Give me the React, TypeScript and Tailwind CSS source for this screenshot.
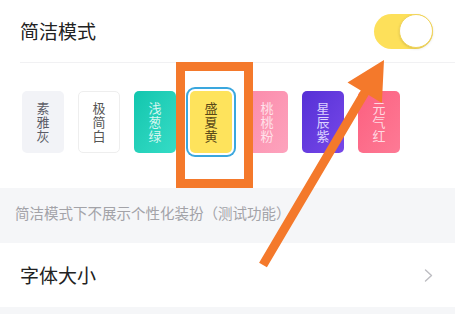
import React from 'react'

const themes = [
  { name: '素雅灰', card: 'bg-[#f2f3f7]', text: 'text-[#5c5c66]' },
  { name: '极简白', card: 'bg-white border border-[#eeeeee]', text: 'text-[#555555]' },
  { name: '浅葱绿', card: 'bg-gradient-to-br from-[#10c6ae] to-[#34dcc6]', text: 'text-[#d6f6f0]' },
  { name: '盛夏黄', card: 'bg-[#fee35c]', text: 'text-[#5a4818]', selected: true },
  { name: '桃桃粉', card: 'bg-gradient-to-br from-[#fb8bab] to-[#fda3bd]', text: 'text-[#ffe2ea]' },
  { name: '星辰紫', card: 'bg-gradient-to-br from-[#5630d6] to-[#7747e8]', text: 'text-[#ddd3ff]' },
  { name: '元气红', card: 'bg-gradient-to-br from-[#fc5f80] to-[#fd7a95]', text: 'text-[#ffd9e1]' },
]

function ThemeCard({ name, card, text, selected }: { name: string; card: string; text: string; selected?: boolean }) {
  return (
    <div
      className={`w-[42px] h-[62px] rounded-[5px] flex flex-col items-center justify-center shrink-0 ${card} ${
        selected ? 'ring-2 ring-[#3aa7de] ring-offset-2 ring-offset-white' : ''
      }`}
    >
      {name.split('').map((ch, i) => (
        <span key={i} className={`text-[13px] leading-[14px] ${text}`}>
          {ch}
        </span>
      ))}
    </div>
  )
}

export default function App() {
  return (
    <div
      className="relative w-[455px] h-[314px] overflow-hidden bg-white"
      style={{ fontFamily: '"Noto Sans CJK SC", "Noto Sans", sans-serif' }}
    >
      {/* 简洁模式 */}
      <div className="h-[62px] flex items-center justify-between pl-5 pr-[22px]">
        <span className="text-[19px] text-[#222222]">简洁模式</span>
        <div className="w-[59px] h-[35px] rounded-full bg-[#fde05a] flex items-center justify-end">
          <div className="w-[34px] h-[34px] rounded-full bg-white border border-[#f1d45a] shadow-sm" />
        </div>
      </div>
      <div className="ml-5 h-px bg-[#f1f1f3]" />

      {/* 主题 */}
      <div className="h-[125px] flex items-start gap-[14px] pl-[22px] pt-[28px]">
        {themes.map((t) => (
          <ThemeCard key={t.name} {...t} />
        ))}
      </div>

      {/* 说明 */}
      <div className="h-[55px] bg-[#f5f6f8] pl-[15px] pt-[12px]">
        <span className="text-[14.5px] text-[#a3a3a8]">简洁模式下不展示个性化装扮（测试功能）</span>
      </div>

      {/* 字体大小 */}
      <div className="h-[64px] flex items-center justify-between pl-5 pr-[22px]">
        <span className="text-[19px] text-[#222222]">字体大小</span>
        <svg width="9" height="13" viewBox="0 0 9 13" fill="none">
          <path d="M1.5 1l6 5.5-6 5.5" stroke="#bdbdc2" strokeWidth="1.4" strokeLinecap="round" strokeLinejoin="round" />
        </svg>
      </div>
      <div className="h-[7px] bg-[#f5f6f8]" />

      {/* 标注 */}
      <div className="absolute left-[176px] top-[62px] w-[77px] h-[126px] border-[9px] border-[#f4792b]" />
      <svg className="absolute left-0 top-0" width="455" height="314" viewBox="0 0 455 314">
        <polygon
          points="384,60 381.9,102.9 368.6,95 266.9,267.3 259.1,262.7 360.8,90.4 347.5,82.5"
          fill="#f4792b"
        />
      </svg>
    </div>
  )
}
